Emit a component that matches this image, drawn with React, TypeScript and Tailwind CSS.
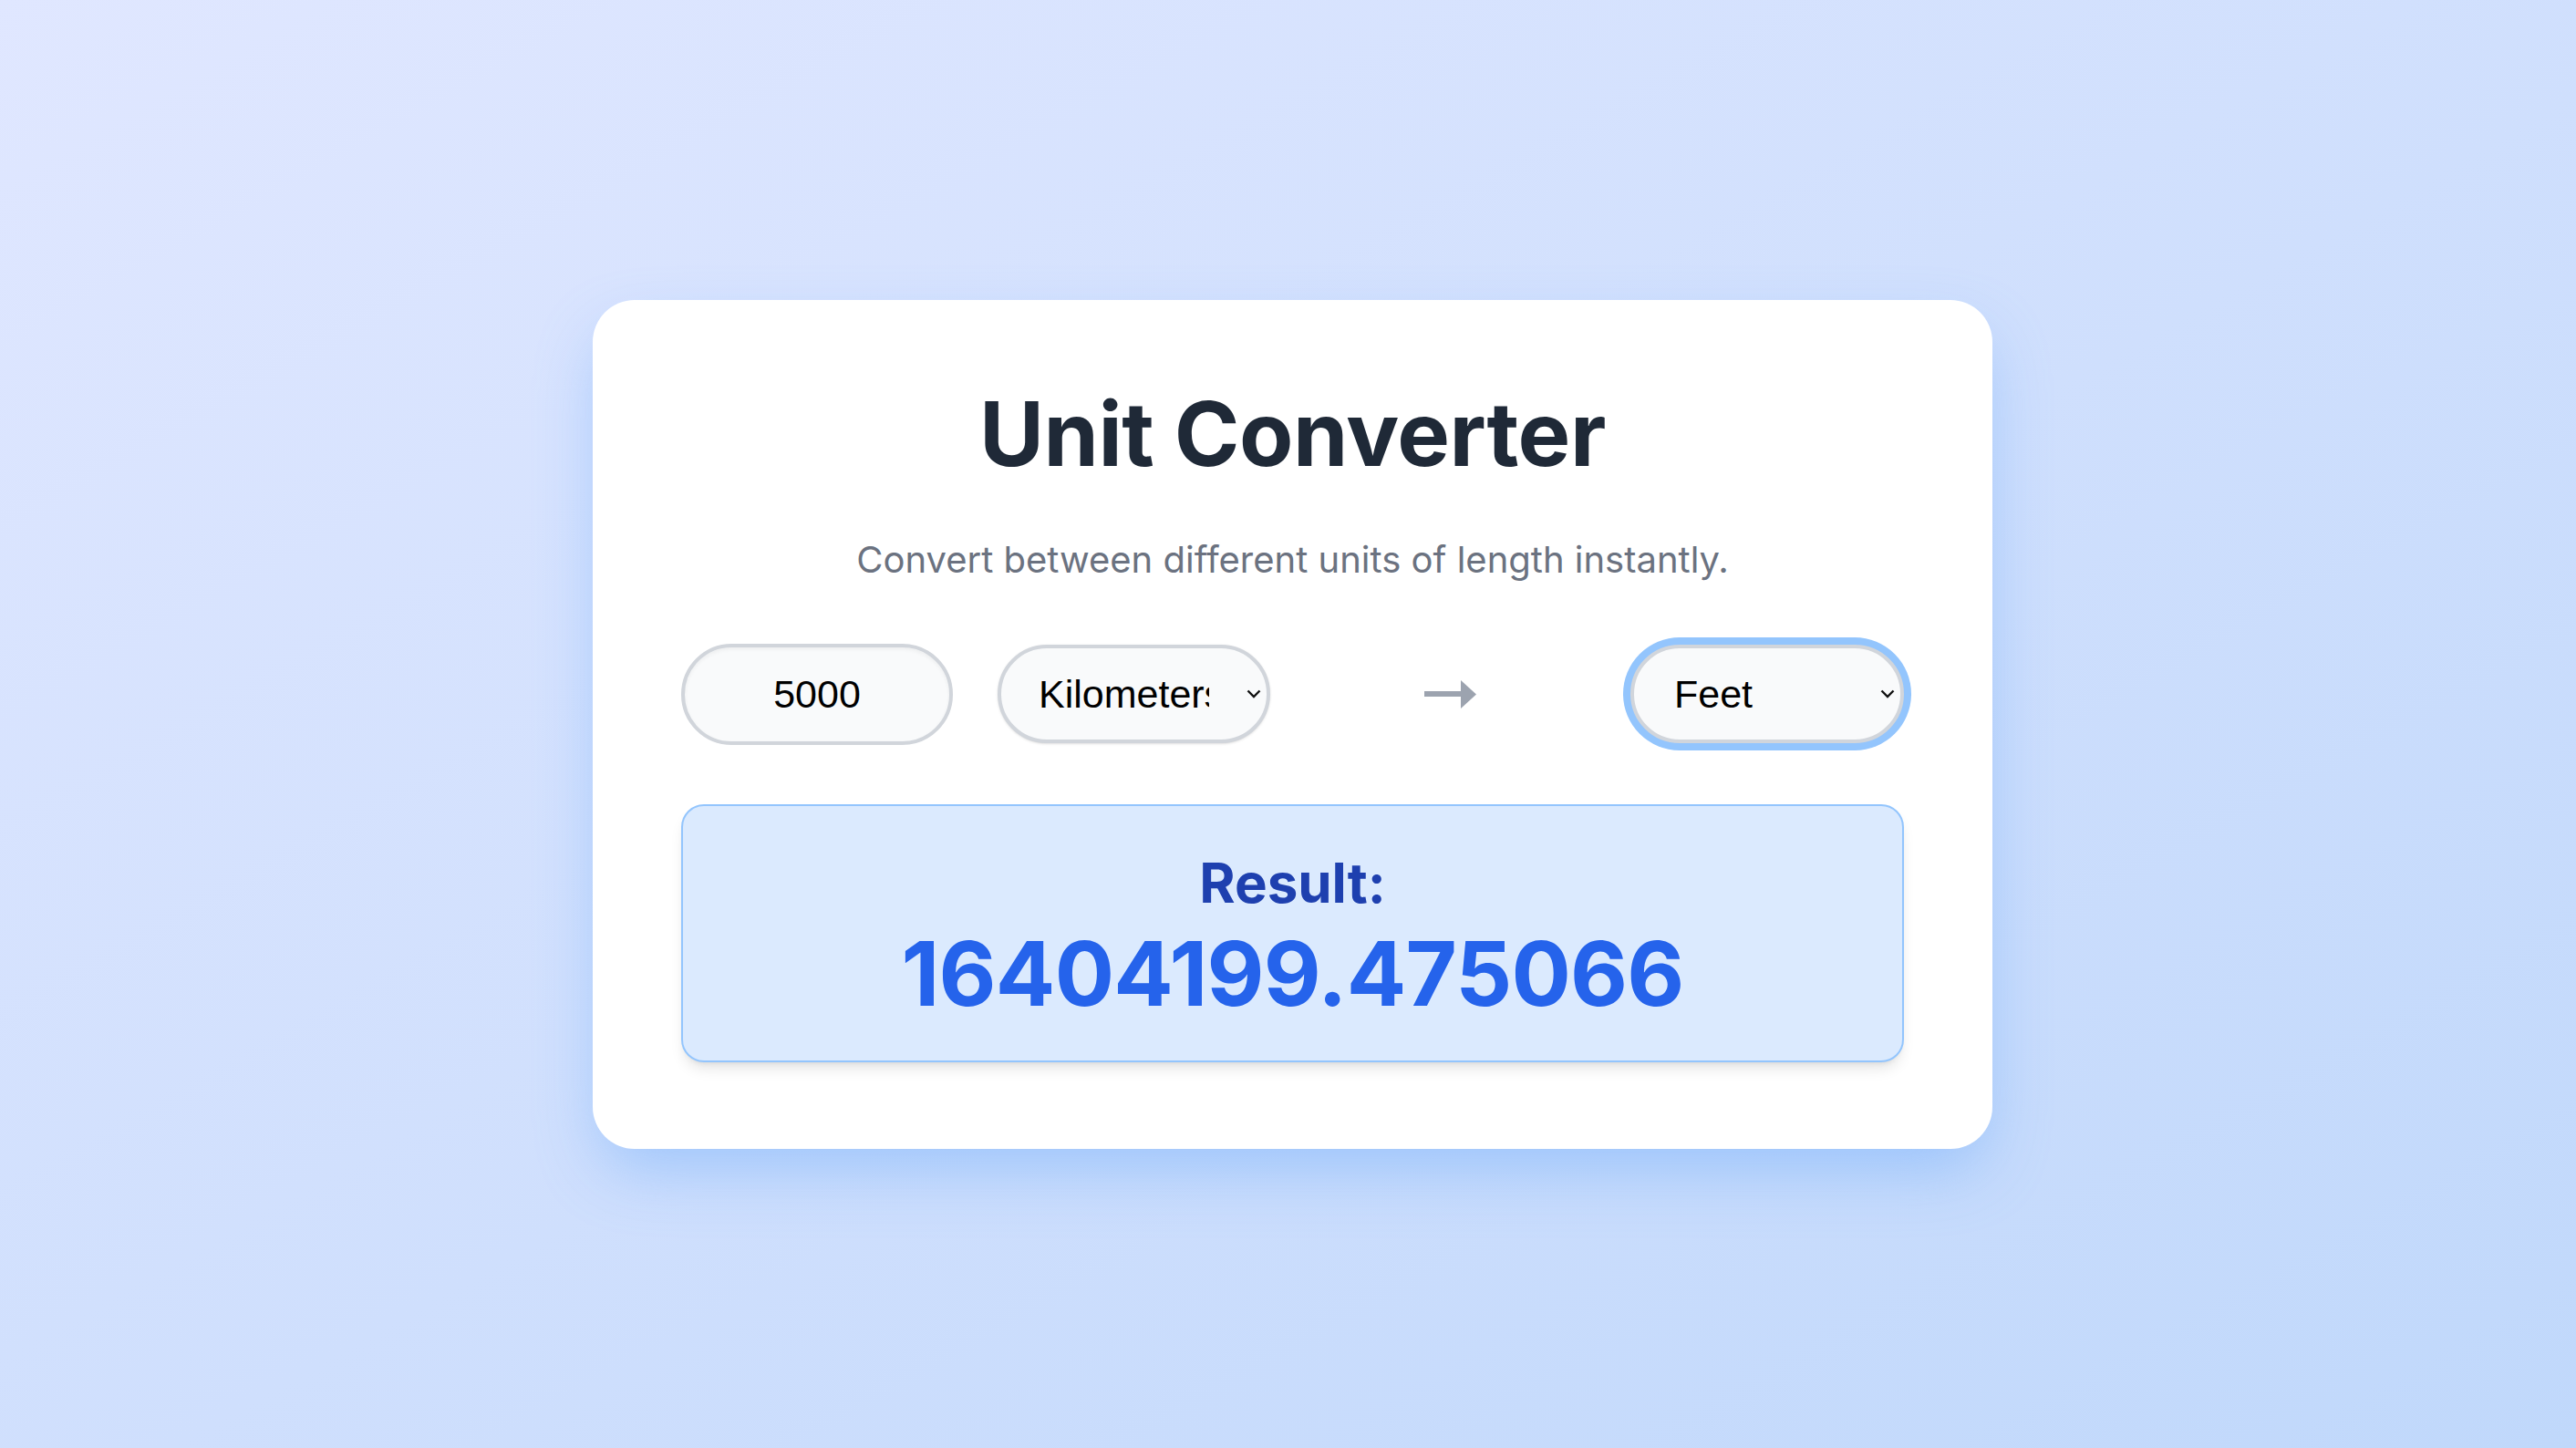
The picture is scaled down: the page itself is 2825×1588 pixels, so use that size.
import { useState } from 'react';

const factors: Record<string, number> = {
  Meters: 1,
  Kilometers: 1000,
  Centimeters: 0.01,
  Millimeters: 0.001,
  Miles: 1609.344,
  Yards: 0.9144,
  Feet: 0.3048,
  Inches: 0.0254,
};

function Chevron() {
  return (
    <svg
      viewBox="0 0 16 10"
      className="pointer-events-none absolute right-[10px] top-1/2 h-[10px] w-[16px] -translate-y-1/2"
      fill="none"
      stroke="#111"
      strokeWidth="2.4"
    >
      <path d="M1.5 1.5 L8 8 L14.5 1.5" />
    </svg>
  );
}

export default function App() {
  const [value, setValue] = useState('5000');
  const [from, setFrom] = useState('Kilometers');
  const [to, setTo] = useState('Feet');

  const result = ((parseFloat(value) || 0) * factors[from]) / factors[to];
  const shown = parseFloat(result.toFixed(6)).toString();

  return (
    <div className="flex min-h-screen items-center justify-center bg-gradient-to-br from-[#e0e7ff] to-[#c0d8fb] pl-[10px] font-['Inter',sans-serif]">
      <div className="w-[1535px] rounded-[46px] bg-white px-[97px] pt-[98px] pb-[95px] shadow-[0_30px_70px_-10px_rgba(96,165,250,0.45)]">
        <h1 className="text-center text-[97px] font-bold leading-none tracking-[-0.005em] text-[#1f2937]">
          Unit Converter
        </h1>
        <p className="mt-[60px] text-center text-[40px] leading-[60px] text-[#6b7280]">
          Convert between different units of length instantly.
        </p>

        {/* Controls */}
        <div className="mt-[62px] flex items-center justify-between font-['Liberation_Sans',Arial,sans-serif] text-[43px] text-black">
          <div className="flex items-center gap-[49px]">
            <input
              value={value}
              onChange={(e) => setValue(e.target.value)}
              className="h-[111px] w-[298px] rounded-full border-[4px] border-[#d1d5db] bg-[#f9fafb] text-center shadow-inner outline-none"
            />
            <div className="relative">
              <select
                value={from}
                onChange={(e) => setFrom(e.target.value)}
                className="h-[108px] w-[299px] appearance-none rounded-full border-[4px] border-[#d1d5db] bg-[#f9fafb] pl-[41px] pr-[63px] shadow-sm outline-none"
              >
                {Object.keys(factors).map((u) => (
                  <option key={u}>{u}</option>
                ))}
              </select>
              <Chevron />
            </div>
          </div>

          <svg viewBox="0 0 59 31" className="h-[31px] w-[59px]" fill="#9ca3af">
            <rect x="1" y="12" width="42" height="6" />
            <path d="M41 0 L58 15.5 L41 31 Z" />
          </svg>

          <div className="relative">
            <select
              value={to}
              onChange={(e) => setTo(e.target.value)}
              className="h-[108px] w-[300px] appearance-none rounded-full border-[4px] border-[#d1d5db] bg-[#f9fafb] pl-[44px] pr-[63px] shadow-sm outline-none ring-[8px] ring-[#93c5fd]"
            >
              {Object.keys(factors).map((u) => (
                <option key={u}>{u}</option>
              ))}
            </select>
            <Chevron />
          </div>
        </div>

        {/* Result */}
        <div className="mt-[65px] rounded-[25px] border-2 border-[#93c5fd] bg-[#dbeafe] pt-[54px] pb-[47px] text-center shadow-lg">
          <div className="text-[60px] font-bold leading-[60px] text-[#1e40af]">Result:</div>
          <div className="mt-[21px] text-[97px] font-bold leading-none tracking-[-0.008em] text-[#2563eb]">{shown}</div>
        </div>
      </div>
    </div>
  );
}
